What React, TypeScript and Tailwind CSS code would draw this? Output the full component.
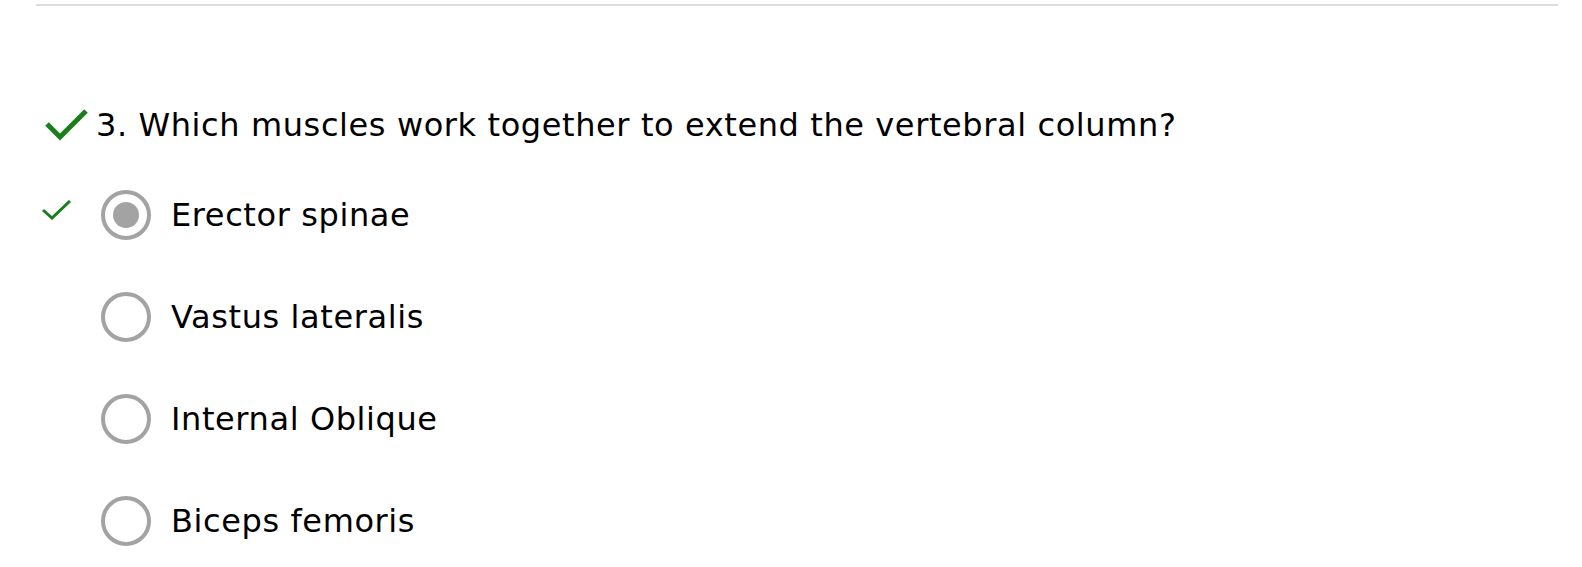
import React from "react";

const answers = [
  { label: "Erector spinae", selected: true, correct: true },
  { label: "Vastus lateralis" },
  { label: "Internal Oblique" },
  { label: "Biceps femoris" },
];

const Radio = ({ selected }: { selected?: boolean }) => (
  <div className="w-[50px] h-[50px] rounded-full border-[4px] border-[#a3a3a3] flex items-center justify-center shrink-0">
    {selected && <div className="w-[26px] h-[26px] rounded-full bg-[#a3a3a3]" />}
  </div>
);

const App = () => {
  return (
    <div className="w-[1582px] h-[567px] bg-white font-['DejaVu_Sans',sans-serif] text-black overflow-hidden tracking-[0.6px]">
      <div className="pt-[4px] pl-[36px] pr-[24px]">
        <div className="h-[2px] bg-[#dcdcdc]" />
      </div>
      <div className="flex items-center h-[40px] mt-[99px] pl-[45px]">
        <svg width="44" height="32" viewBox="0 0 44 32" className="shrink-0">
          <path d="M2 15 L15 28 L41 2" fill="none" stroke="#1a7f1a" strokeWidth="5" />
        </svg>
        <span className="ml-[7px] text-[32px] leading-none">3. Which muscles work together to extend the vertebral column?</span>
      </div>
      <div className="flex flex-col mt-[19px]">
        {answers.map((a, i) => (
          <div key={i} className="flex items-center h-[102px]">
            <div className="w-[101px] pl-[42px] shrink-0 flex mb-[10px]">
              {a.correct && (
                <svg width="29" height="20" viewBox="0 0 29 20">
                  <path d="M1 10 L10 18 L28 1" fill="none" stroke="#1a7f1a" strokeWidth="3" />
                </svg>
              )}
            </div>
            <Radio selected={a.selected} />
            <span className="ml-[20px] text-[32px] leading-none">{a.label}</span>
          </div>
        ))}
      </div>
    </div>
  );
};

export default App;
